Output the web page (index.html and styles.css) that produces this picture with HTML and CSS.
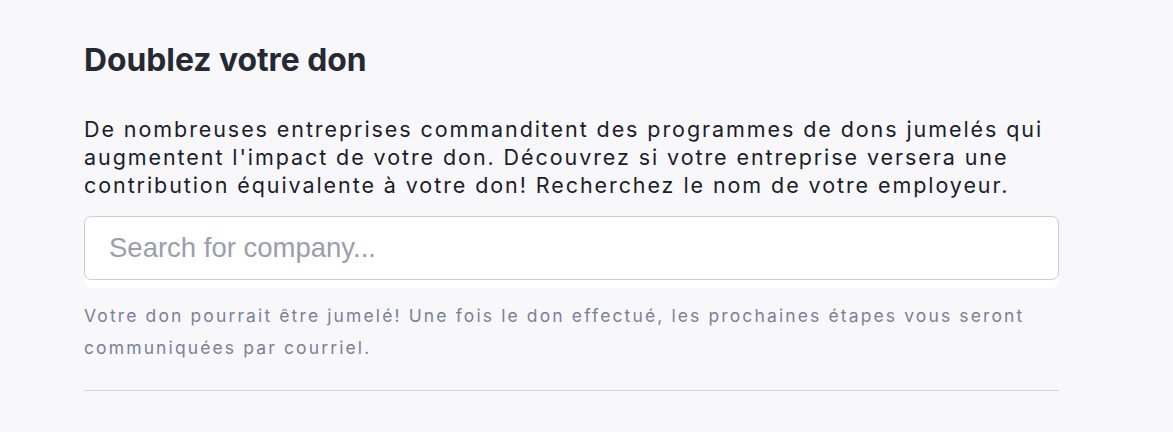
FILE: index.html
```html
<!DOCTYPE html>
<html lang="fr">
<head>
<meta charset="utf-8">
<title>Doublez votre don</title>
<link rel="stylesheet" href="styles.css">
</head>
<body>
<main class="page">
  <section class="match">
    <h2 class="match-title">Doublez votre don</h2>
    <p class="match-text">De nombreuses entreprises commanditent des programmes de dons jumelés qui augmentent l'impact de votre don. Découvrez si votre entreprise versera une contribution équivalente à votre don! Recherchez le nom de votre employeur.</p>
    <div class="search-wrap">
      <input class="search-input" type="text" placeholder="Search for company...">
    </div>
    <p class="match-help">Votre don pourrait être jumelé! Une fois le don effectué, les prochaines étapes vous seront communiquées par courriel.</p>
    <hr class="divider">
  </section>
</main>
</body>
</html>
```

FILE: styles.css
```css
html, body {
  margin: 0;
  padding: 0;
  background: #f8f8fa;
}
body {
  font-family: Inter, "Noto Sans", sans-serif;
  color: #1f2433;
}
.page {
  padding: 40px 114px 0 84px;
}
.match {
  width: 975px;
}
.match-title {
  margin: 0;
  font-size: 31.8px;
  line-height: 40px;
  font-weight: 700;
  color: #252934;
}
.match-text {
  margin: 35px 0 0;
  font-size: 21.5px;
  line-height: 28px;
  color: #1a1d2b;
  letter-spacing: 1.92px;
}
.search-wrap {
  margin-top: 17px;
  background: #ffffff;
  border-radius: 7px;
  padding-bottom: 8px;
}
.search-input {
  display: block;
  box-sizing: border-box;
  width: 100%;
  height: 64px;
  margin: 0;
  padding: 0 24px;
  border: 1px solid #cdcdd2;
  border-radius: 7px;
  background: #fff;
  font-family: "Liberation Sans", Arial, sans-serif;
  font-size: 27.5px;
  color: #1a1d2b;
  outline: none;
}
.search-input::placeholder {
  color: #9a9eab;
}
.match-help {
  margin: 12px 0 0;
  font-size: 17.5px;
  line-height: 32px;
  color: #7c8097;
  letter-spacing: 2.12px;
}
.divider {
  margin: 26px 0 0;
  border: 0;
  height: 1px;
  background: #d3d4dd;
}
```
